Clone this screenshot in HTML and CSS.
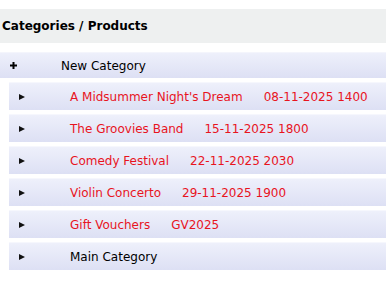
FILE: index.html
```
<!DOCTYPE html>
<html lang="en">
<head>
    <meta charset="UTF-8">
    <title>Categories / Products</title>
    <link rel="stylesheet" href="styles.css">
</head>
<body>
    <div class="title">Categories / Products</div>
    <div class="cat">
        <span class="plus"><svg width="7" height="7" viewBox="0 0 7 7"><path d="M2.5 0h2v2.5H7v2H4.5V7h-2V4.5H0v-2h2.5z" fill="#000"/></svg></span>
        <span class="label">New Category</span>
    </div>
    <div class="list">
        <div class="item">
            <span class="arrow"></span>
            <span class="name red">A Midsummer Night's Dream</span><span class="info red">08-11-2025 1400</span>
        </div>
        <div class="item">
            <span class="arrow"></span>
            <span class="name red">The Groovies Band</span><span class="info red">15-11-2025 1800</span>
        </div>
        <div class="item">
            <span class="arrow"></span>
            <span class="name red">Comedy Festival</span><span class="info red">22-11-2025 2030</span>
        </div>
        <div class="item">
            <span class="arrow"></span>
            <span class="name red">Violin Concerto</span><span class="info red">29-11-2025 1900</span>
        </div>
        <div class="item">
            <span class="arrow"></span>
            <span class="name red">Gift Vouchers</span><span class="info red">GV2025</span>
        </div>
        <div class="item">
            <span class="arrow"></span>
            <span class="name">Main Category</span>
        </div>
    </div>
</body>
</html>
```
FILE: styles.css
```
body{
    margin: 0;
    font-family: "DejaVu Sans", Verdana, sans-serif;
    font-size: 12px;
    color: #000;
    background: #fff;
}
.title{
    margin-top: 9px;
    height: 34px;
    line-height: 34px;
    padding-left: 2px;
    background-color: #eef0f0;
    font-weight: bold;
    font-size: 12px;
}
.cat{
    margin-top: 9px;
    height: 26px;
    display: flex;
    align-items: center;
    background: linear-gradient(#eef0fb, #dde0f4);
    border-top: 1px solid #f4f5fc;
    box-sizing: border-box;
}
.plus{
    width: 61px;
    padding-left: 10px;
    box-sizing: border-box;
    display: flex;
}
.list{
    margin-top: 4px;
    margin-left: 9px;
    display: flex;
    flex-direction: column;
    gap: 4px;
}
.item{
    height: 28px;
    display: flex;
    align-items: center;
    background: linear-gradient(#eef0fb, #dde0f4);
    border-top: 1px solid #f6f7fd;
    box-sizing: border-box;
}
.arrow{
    width: 0;
    height: 0;
    margin-left: 10px;
    margin-right: 45px;
    border-top: 3px solid transparent;
    border-bottom: 3px solid transparent;
    border-left: 6px solid #111;
}
.red{
    color: #e8141e;
}
.info{
    margin-left: 21px;
}
```
